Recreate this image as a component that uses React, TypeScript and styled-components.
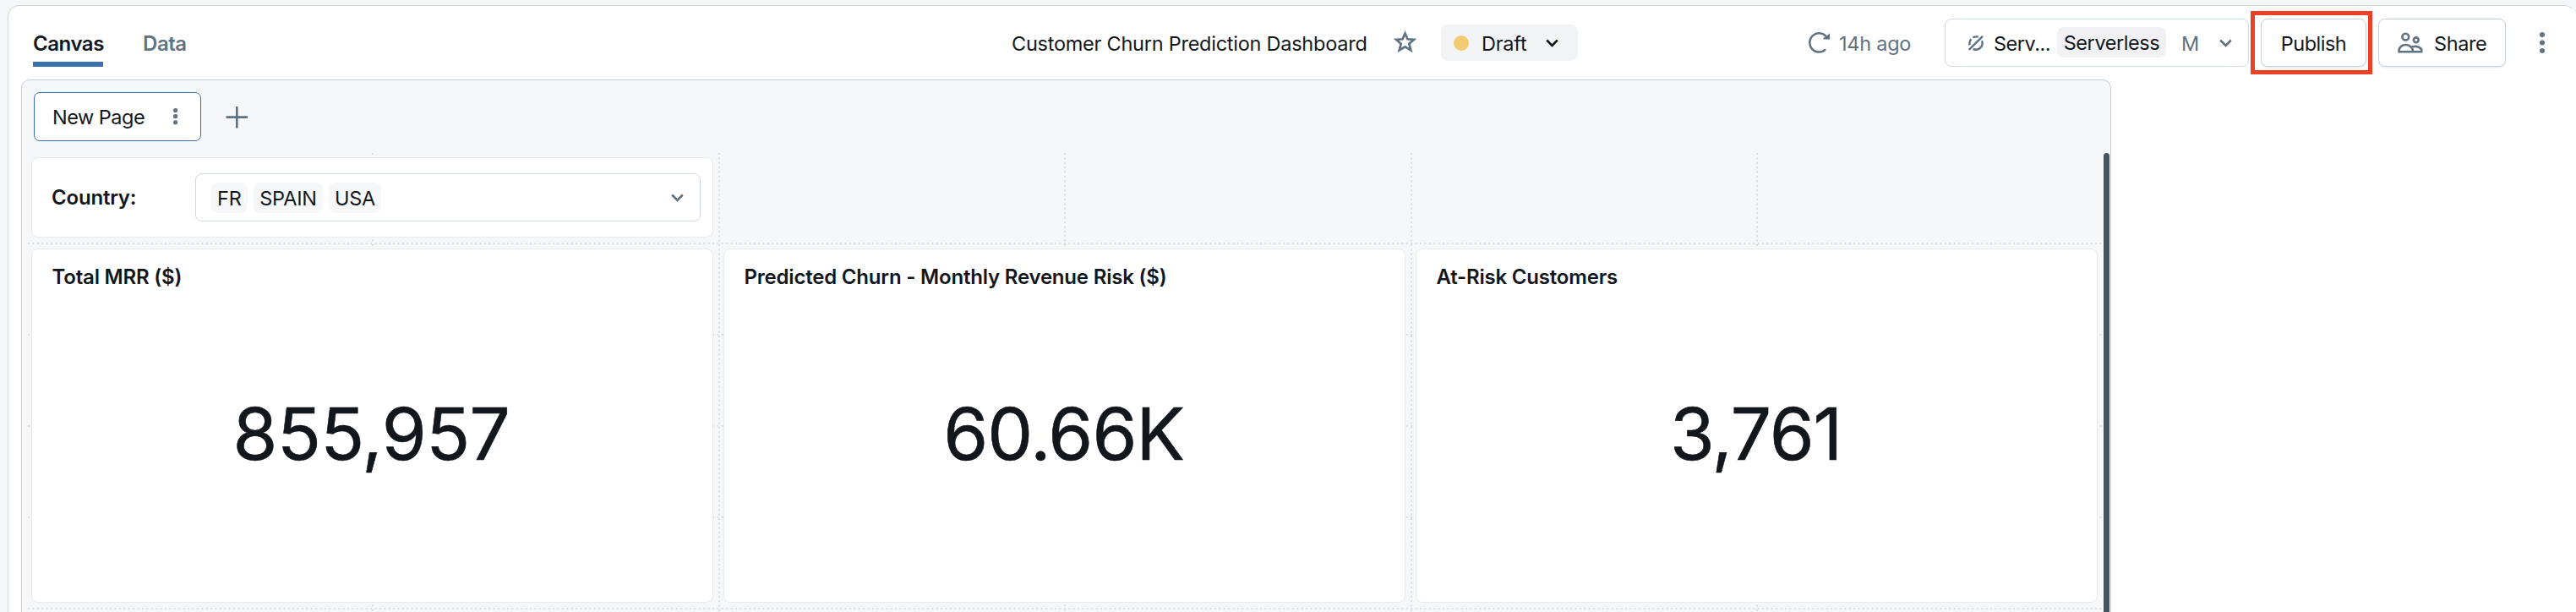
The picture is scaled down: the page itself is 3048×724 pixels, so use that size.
import React from "react";
import styled, { createGlobalStyle } from "styled-components";

const ink = "#11171c";
const slate = "#5f7281";
const blue = "#3a6fb0";

const Global = createGlobalStyle`
  *, *::before, *::after { box-sizing: border-box; }
  html, body { margin: 0; background: #f6f7f9; }
  body { font-family: Inter, "Liberation Sans", sans-serif; color: ${ink}; overflow: hidden; }
  button { font: inherit; color: inherit; margin: 0; padding: 0; background: none; border: 0; text-align: left; }
  svg { display: block; flex: none; }
`;

const Page = styled.div`
  height: 724px;
  padding: 6px 0 0 9px;
  overflow: hidden;
`;

const Shell = styled.div`
  height: 734px;
  background: #fff;
  border: 1px solid #d1d9e1;
  border-right-color: transparent;
  border-radius: 14px;
`;

const Header = styled.header`
  height: 87px;
  display: flex;
  align-items: flex-start;
  justify-content: space-between;
  padding: 15px 36px 0 29px;
`;

const Tabs = styled.nav`
  display: flex;
  gap: 47px;
  padding-top: 14px;
`;

const Tab = styled.button<{ $active?: boolean; $w: number }>`
  width: ${(p) => p.$w}px;
  height: 43px;
  padding-top: 1px;
  display: flex;
  align-items: flex-start;
  white-space: nowrap;
  font-size: 24px;
  font-weight: 600;
  line-height: 30px;
  letter-spacing: -0.45px;
  color: ${(p) => (p.$active ? ink : slate)};
  border-bottom: 6px solid ${(p) => (p.$active ? blue : "transparent")};
`;

const Label = styled.span<{ $w?: number; $muted?: boolean; $ls?: number; $ml?: number }>`
  flex: none;
  font-size: 23.5px;
  line-height: 30px;
  padding-top: 2px;
  margin-left: ${(p) => p.$ml ?? 0}px;
  white-space: nowrap;
  letter-spacing: ${(p) => p.$ls ?? -0.25}px;
  color: ${(p) => (p.$muted ? slate : ink)};
  width: ${(p) => (p.$w ? p.$w + "px" : "auto")};
`;

const TitleGroup = styled.div`
  display: flex;
  align-items: center;
  height: 57px;
  margin-left: 975px;
  flex: 1;
`;

const StarSlot = styled.span`
  margin: 0 28px 0 31px;
  padding-bottom: 3px;
`;

const StatusPill = styled.button`
  width: 162px;
  height: 43px;
  border-radius: 8px;
  background: #f2f3f5;
  display: flex;
  align-items: center;
  padding-left: 15px;
`;

const Dot = styled.i`
  width: 18px;
  height: 18px;
  border-radius: 50%;
  background: #f2cb73;
  margin-right: 15px;
`;

const Actions = styled.div`
  display: flex;
  align-items: center;
  height: 57px;
`;

const Refresh = styled.div`
  display: flex;
  align-items: center;
  gap: 10px;
  margin-right: 39px;
`;

const Box = styled.button<{ $w: number; $raised?: boolean }>`
  width: ${(p) => p.$w}px;
  height: 57px;
  display: flex;
  align-items: center;
  background: #fff;
  border: 1px solid ${(p) => (p.$raised ? "#c3ccd8" : "#d1d9e1")};
  border-radius: 8px;
  box-shadow: ${(p) => (p.$raised ? "0 2px 0 #f1f2f4" : "none")};
`;

const Warehouse = styled(Box)`
  padding-left: 27px;
`;

const Tag = styled.span`
  flex: none;
  height: 36px;
  width: 129px;
  border-radius: 8px;
  background: #f1f1f4;
  display: flex;
  align-items: center;
  justify-content: center;
  margin: 0 18px 1px 9px;
`;

const PublishSlot = styled.div`
  position: relative;
  margin: 0 14px;
`;

const Publish = styled(Box)`
  justify-content: center;
`;

const Highlight = styled.span`
  position: absolute;
  inset: -9px -7px -9px -12px;
  border: 5px solid #eb4025;
  pointer-events: none;
`;

const Share = styled(Box)`
  padding-left: 22px;
  gap: 13px;
`;

const More = styled.button`
  margin-left: 40px;
`;

const Canvas = styled.main`
  width: 2473px;
  height: 646px;
  margin-left: 15px;
  border: 1px solid #c3ccd8;
  border-radius: 10px 10px 0 0;
  background: #f6f7f9;
`;

const PageTabs = styled.div`
  height: 86px;
  display: flex;
  align-items: flex-start;
  padding: 14px 0 0 14px;
`;

const PageTab = styled.div`
  width: 198px;
  height: 58px;
  display: flex;
  align-items: center;
  padding-left: 21px;
  gap: 34px;
  background: #fff;
  border: 1px solid ${blue};
  border-radius: 7px;
`;

const AddButton = styled.button`
  margin: 17px 0 0 29px;
`;

const Scroller = styled.div`
  position: relative;
  height: 560px;
`;

const GridLines = styled.svg`
  position: absolute;
  left: 0;
  top: 0;
`;

const Board = styled.div`
  position: relative;
  padding: 5px 0 0 11px;
  display: grid;
  grid-template-columns: repeat(3, 807px);
  grid-template-rows: 95px 419px;
  gap: 13px 12px;
`;

const Card = styled.section`
  background: #fff;
  border: 1px solid #e8eaed;
  border-radius: 8px;
`;

const FilterCard = styled(Card)`
  grid-column: 1 / -1;
  width: 807px;
  display: flex;
  align-items: center;
  justify-content: space-between;
  padding: 0 14px 0 23px;
`;

const Heading = styled.h2`
  margin: 0;
  padding-top: 1px;
  font-size: 24px;
  font-weight: 600;
  line-height: 30px;
  white-space: nowrap;
  letter-spacing: -0.2px;
`;

const Select = styled.div`
  width: 598px;
  height: 57px;
  border: 1px solid #d1d9e1;
  border-radius: 8px;
  display: flex;
  align-items: center;
  gap: 7px;
  padding: 0 19px 0 18px;
  & > svg { margin-left: auto; }
`;

const Chip = styled.span<{ $w: number }>`
  width: ${(p) => p.$w}px;
  height: 36px;
  border-radius: 8px;
  background: #f6f7f9;
  display: flex;
  align-items: center;
  justify-content: center;
`;

const Metric = styled(Card)`
  padding: 17px 23.5px;
  display: flex;
  flex-direction: column;
`;

const Value = styled.div<{ $ls: number }>`
  margin-top: 117px;
  padding-right: 2px;
  text-align: center;
  font-size: 85.5px;
  line-height: 106px;
  white-space: nowrap;
  letter-spacing: ${(p) => p.$ls}px;
  -webkit-text-stroke: 0.6px ${ink};
`;

const ScrollThumb = styled.div`
  position: absolute;
  right: 1px;
  top: 0;
  width: 7px;
  height: 600px;
  border-radius: 4px;
  background: #445461;
`;

const Chevron = ({ color = slate }: { color?: string }) => (
  <svg width="15" height="10" viewBox="0 0 15 10" fill="none" stroke={color} strokeWidth="2.6">
    <path d="M1.2 1.5 7.5 7.8 13.8 1.5" />
  </svg>
);

const Dots = ({ r, gap }: { r: number; gap: number }) => (
  <svg width={r * 2} height={gap * 2 + r * 2} fill={slate}>
    {[0, 1, 2].map((i) => (
      <circle key={i} cx={r} cy={r + gap * i} r={r} />
    ))}
  </svg>
);

const columns = [415, 825, 1234, 1644, 2053];
const rows = [107, 215, 323, 431, 539];

const metrics = [
  { title: "Total MRR ($)", value: "855,957", spacing: -0.6 },
  { title: "Predicted Churn - Monthly Revenue Risk ($)", value: "60.66K", spacing: -1 },
  { title: "At-Risk Customers", value: "3,761", spacing: -1.2 },
];

export default function App() {
  return (
    <Page>
      <Global />
      <Shell>
        <Header>
          <Tabs>
            <Tab $active $w={83}>Canvas</Tab>
            <Tab $w={53}>Data</Tab>
          </Tabs>
          <TitleGroup>
            <Label $w={421} $ls={-0.25}>Customer Churn Prediction Dashboard</Label>
            <StarSlot>
              <svg width="28" height="27" viewBox="0 0 28 27" fill="none" stroke={slate} strokeWidth="2.7">
                <path d="M13.5 3.6 16.5 10.3 24 10.9 18.3 15.8 20.3 23.4 13.5 19.4 6.7 23.4 8.7 15.8 3 10.9 10.5 10.3Z" />
              </svg>
            </StarSlot>
            <StatusPill>
              <Dot />
              <Label $w={76}>Draft</Label>
              <Chevron color={ink} />
            </StatusPill>
          </TitleGroup>
          <Actions>
            <Refresh>
              <svg width="26" height="26" viewBox="0 0 26 26" fill="none" stroke={slate} strokeWidth="2.5">
                <path d="M20.1 20.4A11.1 11.1 0 1 1 21.8 6.6" />
                <path d="M25 1.2V8.6H17.4V6.8L20.6 5.4Z" fill={slate} stroke="none" />
              </svg>
              <Label $muted $w={86}>14h ago</Label>
            </Refresh>
            <Warehouse $w={360}>
              <svg width="18" height="18" viewBox="0 0 18 18" fill="none" stroke={slate} strokeWidth="2.4">
                <path d="M.8 17 17 .8M1.5 11.2A7.6 7.6 0 0 1 3.4 4.4M5.4 2.6A7.6 7.6 0 0 1 11.8 1.7M16 6.2A7.6 7.6 0 0 1 5.6 15.9" />
              </svg>
              <Label $w={66} $ml={12} $ls={-0.5}>Serv...</Label>
              <Tag><Label $ls={-0.42}>Serverless</Label></Tag>
              <Label $muted $w={45}>M</Label>
              <Chevron />
            </Warehouse>
            <PublishSlot>
              <Publish $w={125} $raised><Label $ls={-0.5}>Publish</Label></Publish>
              <Highlight />
            </PublishSlot>
            <Share $w={151} $raised>
              <svg width="30" height="25" viewBox="0 0 30 25" fill="none" stroke={slate} strokeWidth="2.6">
                <circle cx="9.3" cy="5.6" r="3.9" />
                <circle cx="21.8" cy="9.3" r="2.9" />
                <path d="M1.6 23.2V20.5C3 17 6 15 9.5 15S16 17 17.8 20.5V23.2ZM15.5 18.2C19 16 25.5 16.5 28.2 20.5V23.2H17.8" />
              </svg>
              <Label $ls={-0.4}>Share</Label>
            </Share>
            <More><Dots r={3} gap={9.5} /></More>
          </Actions>
        </Header>
        <Canvas>
          <PageTabs>
            <PageTab>
              <Label $w={109} $ls={-0.5}>New Page</Label>
              <Dots r={2.6} gap={7.1} />
            </PageTab>
            <AddButton>
              <svg width="26" height="26" stroke={slate} strokeWidth="2.6">
                <path d="M13.3 0V25.4M.6 12.6H26" />
              </svg>
            </AddButton>
          </PageTabs>
          <Scroller>
            <GridLines width="2464" height="560" stroke="#d9dce1" strokeWidth="2" strokeDasharray="2 3.4">
              {columns.map((x) => <line key={x} x1={x} x2={x} y1="0" y2="560" />)}
              {rows.map((y) => <line key={y} x1="7" x2="2464" y1={y} y2={y} />)}
            </GridLines>
            <Board>
              <FilterCard>
                <Heading>Country:</Heading>
                <Select>
                  <Chip $w={43}><Label $ls={0}>FR</Label></Chip>
                  <Chip $w={82}><Label $ls={-0.2}>SPAIN</Label></Chip>
                  <Chip $w={62}><Label>USA</Label></Chip>
                  <Chevron />
                </Select>
              </FilterCard>
              {metrics.map((m) => (
                <Metric key={m.title}>
                  <Heading>{m.title}</Heading>
                  <Value $ls={m.spacing}>{m.value}</Value>
                </Metric>
              ))}
            </Board>
            <ScrollThumb />
          </Scroller>
        </Canvas>
      </Shell>
    </Page>
  );
}
